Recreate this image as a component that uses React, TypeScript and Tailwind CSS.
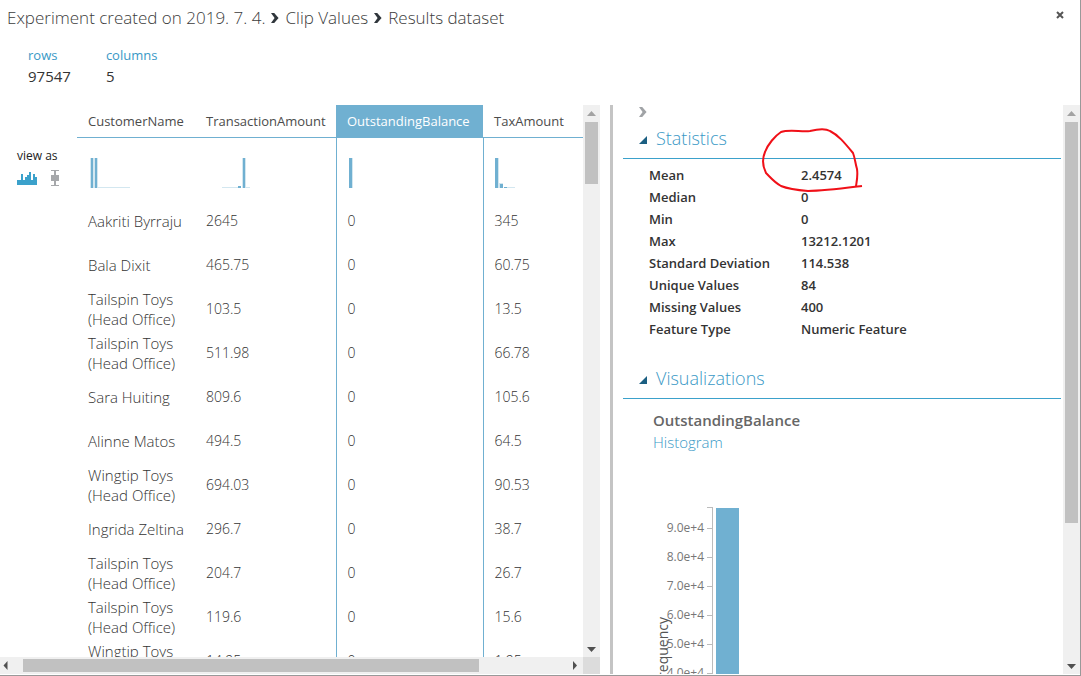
import React from 'react';

type Bar = { x: number; w: number; h: number; light?: boolean };

const rows = [
  ['Aakriti Byrraju', '2645', '0', '345'],
  ['Bala Dixit', '465.75', '0', '60.75'],
  ['Tailspin Toys (Head Office)', '103.5', '0', '13.5'],
  ['Tailspin Toys (Head Office)', '511.98', '0', '66.78'],
  ['Sara Huiting', '809.6', '0', '105.6'],
  ['Alinne Matos', '494.5', '0', '64.5'],
  ['Wingtip Toys (Head Office)', '694.03', '0', '90.53'],
  ['Ingrida Zeltina', '296.7', '0', '38.7'],
  ['Tailspin Toys (Head Office)', '204.7', '0', '26.7'],
  ['Tailspin Toys (Head Office)', '119.6', '0', '15.6'],
  ['Wingtip Toys (Head Office)', '14.95', '0', '1.95'],
];

const columns: { name: string; width?: string; bars: Bar[] }[] = [
  {
    name: 'CustomerName',
    width: 'w-[118px]',
    bars: [
      { x: 2, w: 8, h: 30, light: true },
      { x: 3, w: 2, h: 30 },
      { x: 7, w: 2, h: 30 },
      { x: 10, w: 32, h: 1, light: true },
    ],
  },
  {
    name: 'TransactionAmount',
    width: 'w-[141px]',
    bars: [
      { x: 16, w: 16, h: 1, light: true },
      { x: 32, w: 3, h: 2 },
      { x: 36, w: 4, h: 30, light: true },
      { x: 37, w: 2, h: 30 },
      { x: 40, w: 4, h: 1, light: true },
    ],
  },
  {
    name: 'OutstandingBalance',
    width: 'w-[147px]',
    bars: [
      { x: 1, w: 4, h: 30, light: true },
      { x: 1, w: 3, h: 30 },
    ],
  },
  {
    name: 'TaxAmount',
    bars: [
      { x: 0, w: 4, h: 30, light: true },
      { x: 0, w: 3, h: 30 },
      { x: 4, w: 4, h: 5, light: true },
      { x: 5, w: 3, h: 4 },
      { x: 9, w: 3, h: 1 },
      { x: 12, w: 8, h: 1, light: true },
    ],
  },
];

const stats = [
  ['Mean', '2.4574'],
  ['Median', '0'],
  ['Min', '0'],
  ['Max', '13212.1201'],
  ['Standard Deviation', '114.538'],
  ['Unique Values', '84'],
  ['Missing Values', '400'],
  ['Feature Type', 'Numeric Feature'],
];

const ticks = ['9.0e+4', '8.0e+4', '7.0e+4', '6.0e+4', '5.0e+4', '4.0e+4'];

function MiniHistogram({ bars }: { bars: Bar[] }) {
  return (
    <svg width="60" height="30" className="block" shapeRendering="crispEdges" aria-hidden="true">
      {bars.map((b, i) => (
        <rect key={i} x={b.x} y={30 - b.h} width={b.w} height={b.h} fill={b.light ? '#d3e7f0' : '#70b0d1'} />
      ))}
    </svg>
  );
}

function Chevron({ className }: { className: string }) {
  return (
    <svg viewBox="0 0 8 10" width="8" height="10" className={className} aria-hidden="true">
      <path d="M0 0H3.2L7.6 5L3.2 10H0L3.6 5Z" fill="currentColor" />
    </svg>
  );
}

const arrowPaths = {
  up: 'M4 11L8.5 6L13 11Z',
  down: 'M4 7L8.5 12L13 7Z',
  left: 'M7.5 4L3.5 8.5L7.5 13Z',
  right: 'M7 4L11 8.5L7 13Z',
};

function ScrollArrow({ dir, muted }: { dir: keyof typeof arrowPaths; muted?: boolean }) {
  return (
    <button type="button" aria-label={`Scroll ${dir}`} className="block size-[17px] shrink-0">
      <svg width="17" height="17" aria-hidden="true">
        <path d={arrowPaths[dir]} fill={muted ? '#a3a3a3' : '#505050'} />
      </svg>
    </button>
  );
}

function VerticalScrollbar({ thumb }: { thumb: string }) {
  return (
    <div className="flex w-[17px] shrink-0 flex-col bg-[#f0f0f0]">
      <ScrollArrow dir="up" muted />
      <div className="min-h-0 flex-1 px-0.5">
        <div className={`bg-[#c1c1c1] ${thumb}`} />
      </div>
      <ScrollArrow dir="down" />
    </div>
  );
}

function SectionHeading({ children }: { children: React.ReactNode }) {
  return (
    <h2 className="mr-0.5 ml-2.5 flex h-[31px] items-start border-b border-[#3ba1cb] pl-4 text-lg leading-5 font-light text-[#3999c6]">
      <button type="button" className="flex items-center gap-2">
        <svg width="9" height="8" className="mt-1" aria-hidden="true">
          <path d="M8 0V8H0Z" fill="#1b5f82" />
        </svg>
        {children}
      </button>
    </h2>
  );
}

function Breadcrumb() {
  return (
    <nav className="flex items-center gap-1.5 text-[17px] leading-6 font-light text-[#3c3c3c]">
      <a href="#experiment">Experiment created on 2019. 7. 4.</a>
      <Chevron className="text-[#30363c]" />
      <a href="#clip-values">Clip Values</a>
      <Chevron className="text-[#30363c]" />
      <a href="#results">Results dataset</a>
    </nav>
  );
}

function DataTable() {
  return (
    <table className="w-full table-fixed border-collapse text-left text-sm leading-5 font-light text-[#333]">
      <thead>
        <tr className="h-8">
          {columns.map((c, i) => (
            <th
              key={c.name}
              className={`border-b border-[#70b0d1] p-0 pl-[11px] text-[13px] font-normal ${c.width ?? ''} ${
                i === 2 ? 'bg-[#70b0d1] text-white' : 'text-[#4b4b4b]'
              }`}
            >
              {c.name}
            </th>
          ))}
        </tr>
      </thead>
      <tbody>
        <tr className="h-[62px]">
          {columns.map((c, i) => (
            <td key={c.name} className={`p-0 pt-5 pl-[11px] align-top ${i === 2 ? 'border-x border-[#70b0d1]' : ''}`}>
              <MiniHistogram bars={c.bars} />
            </td>
          ))}
        </tr>
        {rows.map((r, ri) => (
          <tr key={ri} className="h-11">
            {r.map((v, i) => (
              <td
                key={i}
                className={`p-0 pl-[11px] align-middle ${i === 0 ? 'text-[15px]' : ''} ${
                  i === 2 ? 'border-x border-[#70b0d1]' : ''
                }`}
              >
                {v}
              </td>
            ))}
          </tr>
        ))}
      </tbody>
    </table>
  );
}

function ViewAs() {
  return (
    <div className="w-[77px] shrink-0 pt-[41px] pl-[17px]">
      <p className="text-xs leading-5 text-[#222]">view as</p>
      <div className="mt-1 flex items-center gap-[14px]">
        <button type="button" aria-label="Histogram view">
          <svg width="20" height="16" className="block" shapeRendering="crispEdges" aria-hidden="true">
            <path
              d="M0 15V10H4V4H6V10H8V7H10V5H12V2H14V10H16V4H18V7H20V15Z"
              fill="#3ba1cb"
            />
          </svg>
        </button>
        <button type="button" aria-label="Box plot view">
          <svg width="8" height="16" className="block" shapeRendering="crispEdges" aria-hidden="true">
            <path d="M0 0H8V1H5V5H8V11H5V15H8V16H0V15H3V11H0V5H3V1H0Z" fill="#a6a8ab" />
          </svg>
        </button>
      </div>
    </div>
  );
}

function Histogram() {
  return (
    <svg width="400" height="260" className="block" aria-label="Histogram of OutstandingBalance">
      <g shapeRendering="crispEdges">
        <path d="M54 2.5H59.5V260" fill="none" stroke="#bcbcbc" />
        <rect x="63" y="3" width="23" height="257" fill="#70b0d1" />
        {ticks.map((t, i) => (
          <rect key={t} x="54" y={23 + i * 29} width="5" height="1" fill="#bcbcbc" />
        ))}
      </g>
      <g fontSize="12" fill="#777" textAnchor="end">
        {ticks.map((t, i) => (
          <text key={t} x="51" y={27 + i * 29}>
            {t}
          </text>
        ))}
      </g>
      <text transform="translate(15 112) rotate(-90)" textAnchor="end" fontSize="14" fill="#555">
        Frequency
      </text>
    </svg>
  );
}

function StatisticsPanel() {
  return (
    <div className="min-w-0 flex-1 overflow-hidden">
      <button type="button" aria-label="Collapse panel" className="mb-2.5 ml-[26px] flex h-[13px] items-center">
        <Chevron className="text-[#a0a3a6]" />
      </button>
      <SectionHeading>Statistics</SectionHeading>
      <div className="relative pt-[5px] pl-9">
        <table className="text-left text-[13px] leading-[22px] text-[#333]">
          <tbody>
            {stats.map(([k, v]) => (
              <tr key={k}>
                <th scope="row" className="w-[152px] p-0 font-semibold">
                  {k}
                </th>
                <td className="p-0 font-semibold">{v}</td>
              </tr>
            ))}
          </tbody>
        </table>
        <svg width="110" height="75" className="pointer-events-none absolute -top-8 left-[145px]" aria-hidden="true">
          <path
            d="M104 59C88 61 66 64 50 64C38 63 28 61 23 59C16 55 13 51 8 46C5 40 4 32 7 25C10 17 17 9 23 5C31 2 43 5 52 4C60 2 67 1 72 4C80 8 86 15 95 26C97 31 97 35 99 42C100 49 99 53 98 59"
            fill="none"
            stroke="#f01018"
            strokeWidth="2"
            strokeLinejoin="round"
          />
        </svg>
      </div>
      <div className="pt-7">
        <SectionHeading>Visualizations</SectionHeading>
      </div>
      <div className="pt-2.5 pl-10">
        <h3 className="text-[15px] leading-[22px] font-semibold text-[#666]">OutstandingBalance</h3>
        <p className="text-[15px] leading-[22px] font-light text-[#3999c6]">Histogram</p>
        <div className="pt-[52px]">
          <Histogram />
        </div>
      </div>
    </div>
  );
}

export default function App() {
  return (
    <main className="flex h-screen flex-col overflow-hidden border-r border-b border-[#999] bg-white font-['Open_Sans',sans-serif]">
      <header className="flex items-start justify-between pt-1.5 pr-4 pl-[7px]">
        <Breadcrumb />
        <button type="button" aria-label="Close" className="pt-[5px]">
          <svg width="8" height="8" className="block" aria-hidden="true">
            <path d="M1 1L7 7M7 1L1 7" stroke="#555" strokeWidth="2" />
          </svg>
        </button>
      </header>
      <dl className="flex gap-[35px] px-7 pt-[15px] pb-[18px] leading-[21px]">
        <div>
          <dt className="text-[13px] leading-[21px] text-[#3999c6]">rows</dt>
          <dd className="text-[15px] leading-[21px] text-[#333]">97547</dd>
        </div>
        <div>
          <dt className="text-[13px] leading-[21px] text-[#3999c6]">columns</dt>
          <dd className="text-[15px] leading-[21px] text-[#333]">5</dd>
        </div>
      </dl>
      <div className="grid min-h-0 flex-1 grid-cols-[61fr_47fr] grid-rows-1 pb-px">
        <section className="flex min-h-0 min-w-0 flex-col pr-2.5">
          <div className="flex min-h-0 flex-1">
            <ViewAs />
            <div className="min-w-0 flex-1 overflow-hidden">
              <DataTable />
            </div>
            <VerticalScrollbar thumb="h-[12%]" />
          </div>
          <div className="flex h-[17px] bg-[#f0f0f0]">
            <ScrollArrow dir="left" />
            <div className="min-w-0 flex-1 py-0.5 pl-1.5">
              <div className="h-full w-[84%] bg-[#c1c1c1]" />
            </div>
            <ScrollArrow dir="right" />
            <div className="w-[17px] bg-[#dcdcdc]" />
          </div>
        </section>
        <section className="flex min-h-0 min-w-0 border-l-[3px] border-[#c4c4c4]">
          <StatisticsPanel />
          <VerticalScrollbar thumb="h-3/4" />
        </section>
      </div>
    </main>
  );
}
